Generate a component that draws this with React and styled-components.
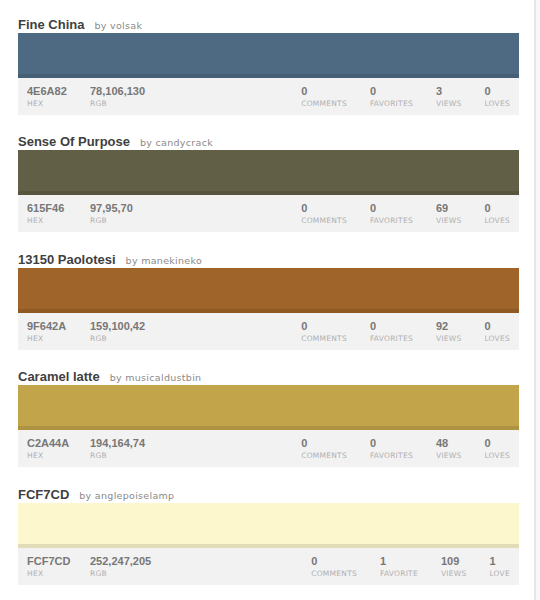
import React from 'react'
import styled, { createGlobalStyle } from 'styled-components'

const Global = createGlobalStyle`
  html, body {
    margin: 0;
    padding: 0;
    background: #f8f8f8;
  }
`

const Pagina = styled.div`
  width: 536px;
  min-height: 600px;
  background: #ffffff;
  border-right: 2px solid #e6e6e6;
  padding: 17px 0 0 18px;
  box-sizing: border-box;
`

const Bloco = styled.div`
  width: 501px;
  margin-bottom: 19.4px;
`

const Titulo = styled.div`
  display: flex;
  align-items: baseline;
  height: 16px;
  line-height: 16px;
`

const Nome = styled.span`
  font-family: "Liberation Sans", Arial, sans-serif;
  font-weight: bold;
  font-size: 13px;
  color: #3f3f3f;
`

const Autor = styled.span`
  font-family: "DejaVu Sans", Verdana, sans-serif;
  font-size: 9.5px;
  letter-spacing: 0.3px;
  color: #8a8a8a;
  margin-left: 10px;
`

const Amostra = styled.div`
  height: 45px;
  background: ${(p) => p.cor};
  box-shadow: inset 0 -4px 0 rgba(0, 0, 0, 0.1);
`

const Dados = styled.div`
  display: flex;
  height: 37px;
  background: #f2f2f2;
  padding: 7px 9px 0 9px;
  box-sizing: border-box;
`

const Grupo = styled.div`
  display: flex;
  gap: ${(p) => p.gap || 0}px;
  margin-left: ${(p) => (p.direita ? 'auto' : '0')};
`

const Item = styled.div`
  display: flex;
  flex-direction: column;
  width: ${(p) => (p.largura ? p.largura + 'px' : 'auto')};
`

const Valor = styled.span`
  font-family: "Liberation Sans", Arial, sans-serif;
  font-weight: bold;
  font-size: 11px;
  line-height: 13px;
  color: #777777;
`

const Rotulo = styled.span`
  font-family: "DejaVu Sans", Verdana, sans-serif;
  font-size: 7.5px;
  letter-spacing: 0.25px;
  line-height: 12px;
  color: #b0b0b0;
  text-transform: uppercase;
`

const paletas = [
  { nome: 'Fine China', autor: 'volsak', hex: '4E6A82', rgb: '78,106,130', c: 0, f: 0, v: 3, l: 0 },
  { nome: 'Sense Of Purpose', autor: 'candycrack', hex: '615F46', rgb: '97,95,70', c: 0, f: 0, v: 69, l: 0 },
  { nome: '13150 Paolotesi', autor: 'manekineko', hex: '9F642A', rgb: '159,100,42', c: 0, f: 0, v: 92, l: 0 },
  { nome: 'Caramel latte', autor: 'musicaldustbin', hex: 'C2A44A', rgb: '194,164,74', c: 0, f: 0, v: 48, l: 0 },
  { nome: 'FCF7CD', autor: 'anglepoiselamp', hex: 'FCF7CD', rgb: '252,247,205', c: 0, f: 1, v: 109, l: 1 },
]

const plural = (n, palavra) => (n === 1 ? palavra : palavra + 's')

const App = () => {
  return (
    <Pagina>
      <Global />
      {paletas.map((p) => (
        <Bloco key={p.nome}>
          <Titulo>
            <Nome>{p.nome}</Nome>
            <Autor>by {p.autor}</Autor>
          </Titulo>
          <Amostra cor={'#' + p.hex} />
          <Dados>
            <Grupo>
              <Item largura={63}>
                <Valor>{p.hex}</Valor>
                <Rotulo>Hex</Rotulo>
              </Item>
              <Item>
                <Valor>{p.rgb}</Valor>
                <Rotulo>RGB</Rotulo>
              </Item>
            </Grupo>
            <Grupo direita gap={23}>
              <Item>
                <Valor>{p.c}</Valor>
                <Rotulo>{plural(p.c, 'Comment')}</Rotulo>
              </Item>
              <Item>
                <Valor>{p.f}</Valor>
                <Rotulo>{plural(p.f, 'Favorite')}</Rotulo>
              </Item>
              <Item>
                <Valor>{p.v}</Valor>
                <Rotulo>{plural(p.v, 'View')}</Rotulo>
              </Item>
              <Item>
                <Valor>{p.l}</Valor>
                <Rotulo>{plural(p.l, 'Love')}</Rotulo>
              </Item>
            </Grupo>
          </Dados>
        </Bloco>
      ))}
    </Pagina>
  )
}

export default App
